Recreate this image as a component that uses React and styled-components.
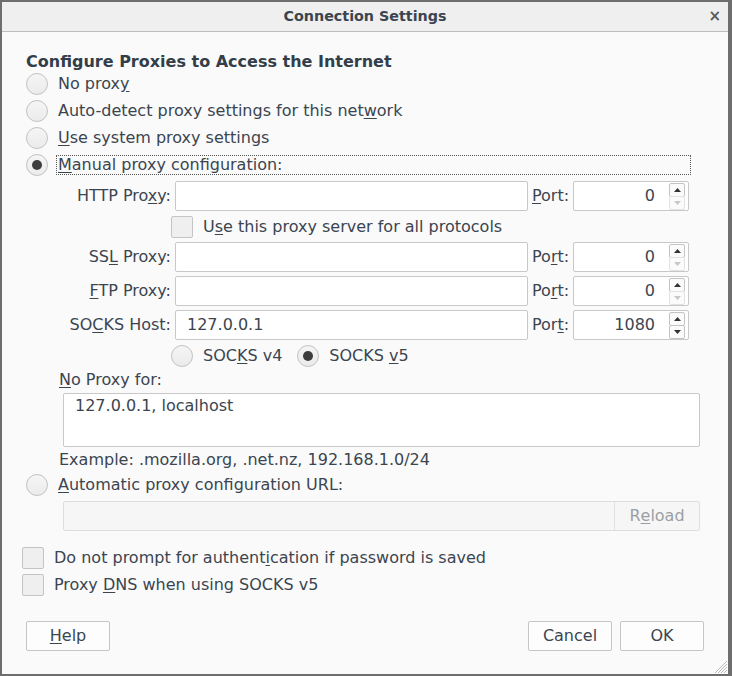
import React from "react";
import styled, { createGlobalStyle } from "styled-components";

const GlobalStyle = createGlobalStyle`
  html, body {
    margin: 0;
    padding: 0;
    background: #6e6e6e;
  }
  body {
    font-family: "DejaVu Sans", "Noto Sans", sans-serif;
    font-size: 16px;
    line-height: 18px;
    color: #3b4550;
  }
`;

const Dialog = styled.div`
  margin: 2px 4px 2px 2px;
  width: 726px;
  height: 672px;
  background: #fafafa;
  display: flex;
  flex-direction: column;
  position: relative;
  overflow: hidden;
`;

const TitleBar = styled.div`
  flex: none;
  background: #efefef;
  border-bottom: 1px solid #bdbdbd;
  display: flex;
  align-items: center;
  justify-content: center;
  padding-bottom: 1px;
  box-sizing: border-box;
  height: 30px;
  position: relative;
`;

const Title = styled.span`
  font-weight: bold;
  font-size: 14.3px;
  color: #3b4550;
`;

const Close = styled.span`
  position: absolute;
  right: 7px;
  top: 5px;
  font-size: 15px;
  font-weight: bold;
  color: #5a5a5a;
`;

const Body = styled.div`
  display: flex;
  flex-direction: column;
  padding: 19px 24px 0 24px;
`;

const Heading = styled.div`
  font-weight: bold;
  font-size: 16px;
  line-height: 19px;
  color: #333e49;
  margin-top: 1px;
`;

const Key = styled.span`
  text-decoration: underline;
  text-underline-offset: 2px;
`;

const OptionRow = styled.label`
  display: flex;
  align-items: center;
  gap: 10px;
  height: 22px;
  margin-top: ${(p) => p.top || 5}px;
  margin-left: ${(p) => p.indent || 0}px;
`;

const Radio = styled.span`
  flex: none;
  width: 20px;
  height: 20px;
  border-radius: 50%;
  border: 1px solid #c2c2c2;
  background: linear-gradient(#f5f5f5, #ebebeb);
  display: flex;
  align-items: center;
  justify-content: center;
  &::after {
    content: "";
    display: ${(p) => (p.checked ? "block" : "none")};
    width: 10px;
    height: 10px;
    border-radius: 50%;
    background: #3d3d3d;
  }
`;

const Check = styled.span`
  flex: none;
  width: 20px;
  height: 20px;
  border: 1px solid #c4c4c4;
  border-radius: 2px;
  background: #efefef;
`;

const FocusLabel = styled.span`
  outline: 1px dotted #555;
  line-height: 18px;
  padding-left: 1px;
  margin-left: -1px;
  width: 632px;
`;

const ProxyGrid = styled.div`
  margin-top: 5px;
  display: grid;
  grid-template-columns: 145px 353px 37px 116px;
  column-gap: 4px;
  row-gap: 4px;
  align-items: center;
`;

const FieldLabel = styled.span`
  text-align: right;
  white-space: nowrap;
`;

const PortLabel = styled.span`
  white-space: nowrap;
`;

const TextInput = styled.div`
  height: 30px;
  box-sizing: border-box;
  border: 1px solid #c8c8c8;
  border-radius: 2px;
  background: #ffffff;
  display: flex;
  align-items: center;
  padding-left: 11px;
`;

const Spin = styled.div`
  height: 30px;
  box-sizing: border-box;
  border: 1px solid #c8c8c8;
  border-radius: 2px;
  background: #ffffff;
  display: flex;
  align-items: center;
  justify-content: flex-end;
  gap: 14px;
  padding-right: 3px;
`;

const SpinButtons = styled.div`
  display: flex;
  flex-direction: column;
  width: 16px;
`;

const SpinButton = styled.div`
  height: 12px;
  border: 1px solid ${(p) => (p.disabled ? "#e2e2e2" : "#c4c4c4")};
  border-radius: 2px;
  background: #fbfbfb;
  display: flex;
  align-items: center;
  justify-content: center;
  margin-top: ${(p) => (p.lower ? "-1px" : "0")};
  & svg {
    fill: ${(p) => (p.disabled ? "#c8c8c8" : "#333")};
  }
`;

const CheckRow = styled.label`
  grid-column: 2 / 5;
  display: flex;
  align-items: center;
  gap: 10px;
  height: 23px;
  margin-left: -4px;
`;

const VersionRow = styled.div`
  grid-column: 2 / 5;
  display: flex;
  align-items: center;
  height: 23px;
  margin-left: -4px;
  gap: 15px;
`;

const Inline = styled.span`
  display: flex;
  align-items: center;
  gap: 10px;
`;

const SubLabel = styled.div`
  margin-top: 4px;
  margin-left: 33px;
  line-height: 18px;
`;

const TextArea = styled.div`
  margin-top: 4px;
  margin-left: 37px;
  border: 1px solid #c8c8c8;
  border-radius: 2px;
  background: #fff;
  padding: 3px 11px;
  box-sizing: border-box;
  height: 54px;
  width: 637px;
  line-height: 18px;
`;

const UrlBox = styled.div`
  margin-top: 5px;
  margin-left: 37px;
  width: 637px;
  height: 30px;
  box-sizing: border-box;
  border: 1px solid #dedede;
  border-radius: 2px;
  background: #f6f6f6;
  display: flex;
  justify-content: flex-end;
`;

const ReloadButton = styled.span`
  width: 84px;
  border-left: 1px solid #e2e2e2;
  display: flex;
  align-items: center;
  justify-content: center;
  color: #9b9fa3;
`;

const Footer = styled.div`
  margin-top: 25px;
  display: flex;
  align-items: center;
`;

const Button = styled.button`
  font: inherit;
  color: #3b4550;
  width: 84px;
  height: 30px;
  border: 1px solid #c6c6c6;
  border-radius: 2px;
  background: #fdfdfd;
  padding: 0;
  margin-left: ${(p) => p.gap || 0}px;
`;

const Spacer = styled.div`
  flex: 1;
`;

const Grip = styled.svg`
  position: absolute;
  right: 0;
  bottom: 0;
`;

const Arrow = ({ down }) => (
  <svg width="7" height="4" viewBox="0 0 7 4">
    {down ? <polygon points="0,0 7,0 3.5,4" /> : <polygon points="0,4 7,4 3.5,0" />}
  </svg>
);

const PortField = ({ value }) => (
  <Spin>
    <span>{value}</span>
    <SpinButtons>
      <SpinButton>
        <Arrow />
      </SpinButton>
      <SpinButton lower disabled={value === "0"}>
        <Arrow down />
      </SpinButton>
    </SpinButtons>
  </Spin>
);

const rows = [
  { label: <>SS<Key>L</Key> Proxy:</>, port: <>Po<Key>r</Key>t:</>, value: "" },
  { label: <><Key>F</Key>TP Proxy:</>, port: <>Po<Key>r</Key>t:</>, value: "" },
  { label: <>SO<Key>C</Key>KS Host:</>, port: <>Por<Key>t</Key>:</>, value: "127.0.0.1", portValue: "1080" },
];

export default function App() {
  return (
    <>
      <GlobalStyle />
      <Dialog>
        <TitleBar>
          <Title>Connection Settings</Title>
          <Close>×</Close>
        </TitleBar>
        <Body>
          <Heading>Configure Proxies to Access the Internet</Heading>
          <OptionRow top={2}>
            <Radio />
            <span>No prox<Key>y</Key></span>
          </OptionRow>
          <OptionRow>
            <Radio />
            <span>Auto-detect proxy settings for this net<Key>w</Key>ork</span>
          </OptionRow>
          <OptionRow>
            <Radio />
            <span><Key>U</Key>se system proxy settings</span>
          </OptionRow>
          <OptionRow>
            <Radio checked />
            <FocusLabel><Key>M</Key>anual proxy configuration:</FocusLabel>
          </OptionRow>

          <ProxyGrid>
            <FieldLabel>HTTP Pro<Key>x</Key>y:</FieldLabel>
            <TextInput />
            <PortLabel><Key>P</Key>ort:</PortLabel>
            <PortField value="0" />

            <CheckRow>
              <Check />
              <span>U<Key>s</Key>e this proxy server for all protocols</span>
            </CheckRow>

            {rows.map((row, i) => (
              <React.Fragment key={i}>
                <FieldLabel>{row.label}</FieldLabel>
                <TextInput>{row.value}</TextInput>
                <PortLabel>{row.port}</PortLabel>
                <PortField value={row.portValue || "0"} />
              </React.Fragment>
            ))}

            <VersionRow>
              <Inline>
                <Radio />
                <span>SOC<Key>K</Key>S v4</span>
              </Inline>
              <Inline>
                <Radio checked />
                <span>SOCKS <Key>v</Key>5</span>
              </Inline>
            </VersionRow>
          </ProxyGrid>

          <SubLabel><Key>N</Key>o Proxy for:</SubLabel>
          <TextArea>127.0.0.1, localhost</TextArea>
          <SubLabel>Example: .mozilla.org, .net.nz, 192.168.1.0/24</SubLabel>

          <OptionRow top={5}>
            <Radio />
            <span><Key>A</Key>utomatic proxy configuration URL:</span>
          </OptionRow>
          <UrlBox>
            <ReloadButton>R<Key>e</Key>load</ReloadButton>
          </UrlBox>

          <OptionRow top={16} indent={-4}>
            <Check />
            <span>Do not prompt for authent<Key>i</Key>cation if password is saved</span>
          </OptionRow>
          <OptionRow top={5} indent={-4}>
            <Check />
            <span>Proxy <Key>D</Key>NS when using SOCKS v5</span>
          </OptionRow>

          <Footer>
            <Button><Key>H</Key>elp</Button>
            <Spacer />
            <Button>Cancel</Button>
            <Button gap={8}>OK</Button>
          </Footer>
        </Body>
        <Grip width="16" height="16" viewBox="0 0 16 16">
          <g stroke="#b8b8b8" strokeWidth="1">
            <line x1="3" y1="15" x2="15" y2="3" />
            <line x1="6" y1="15" x2="15" y2="6" />
            <line x1="9" y1="15" x2="15" y2="9" />
            <line x1="12" y1="15" x2="15" y2="12" />
          </g>
        </Grip>
      </Dialog>
    </>
  );
}
